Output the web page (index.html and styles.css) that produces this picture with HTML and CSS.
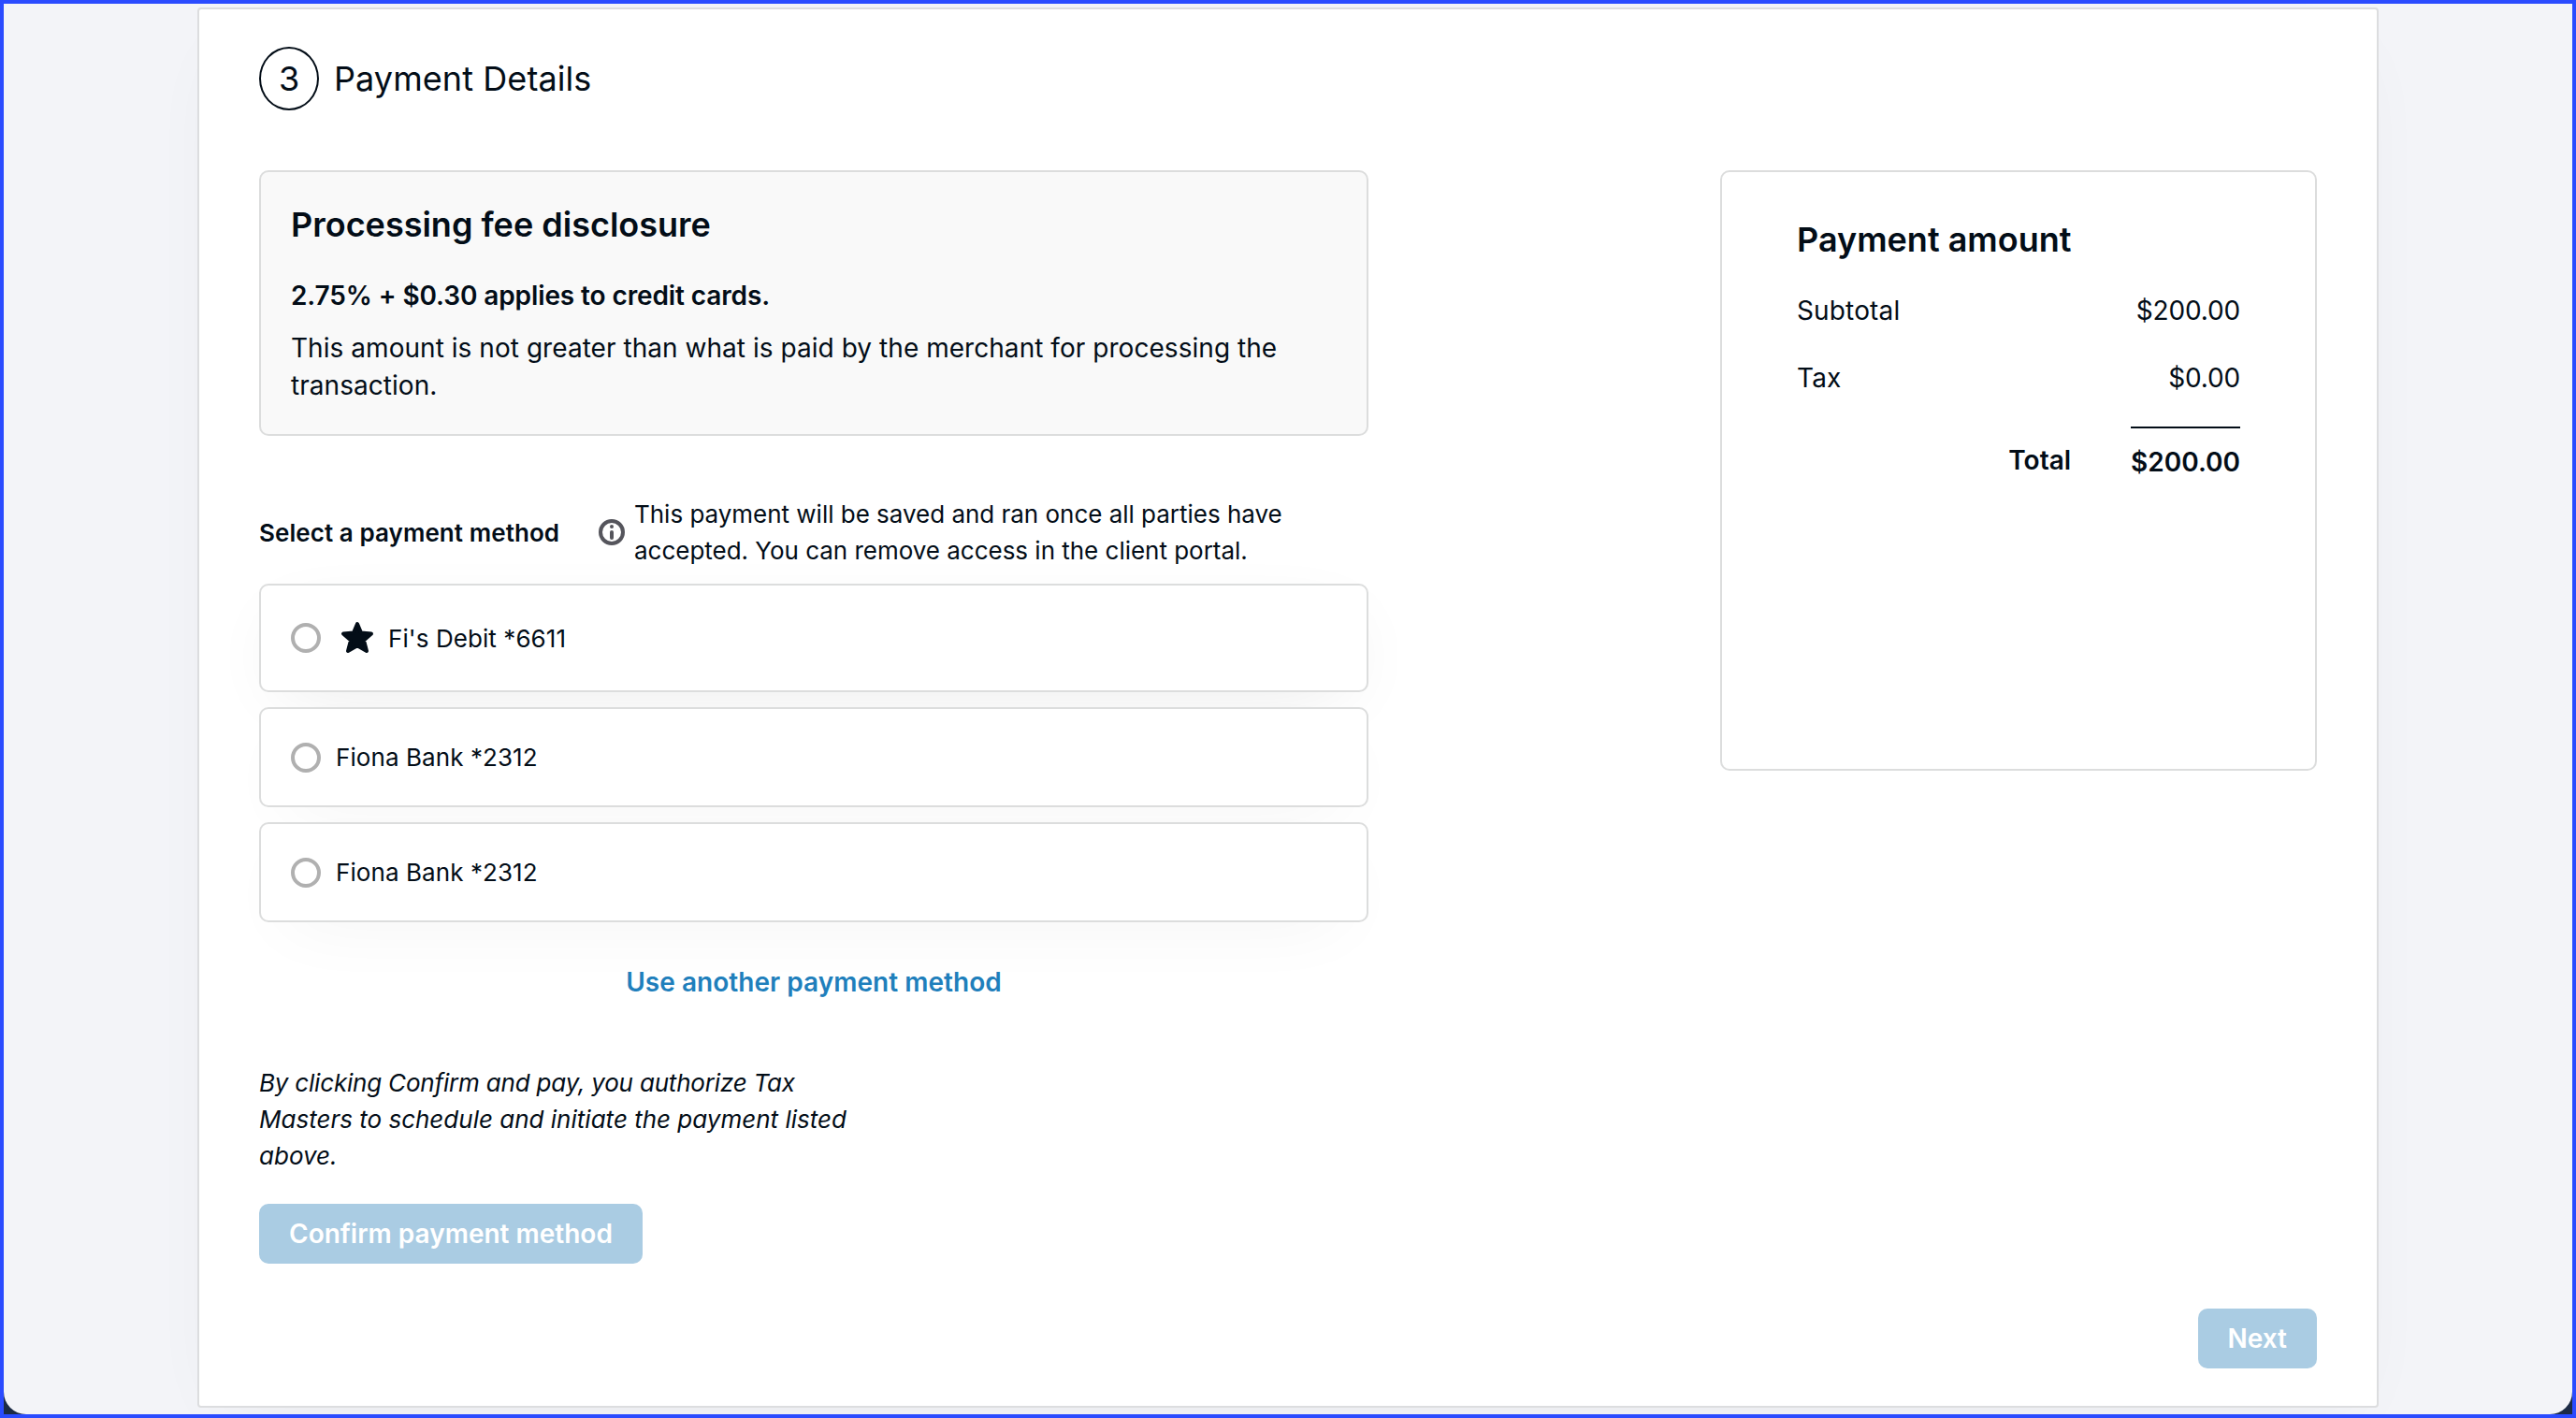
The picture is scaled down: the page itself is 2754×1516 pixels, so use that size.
FILE: index.html
```html
<!DOCTYPE html>
<html lang="en">
<head>
    <meta charset="UTF-8">
    <meta name="viewport" content="width=device-width, initial-scale=1.0">
    <title>Payment Details</title>
    <link rel="stylesheet" href="styles.css">
</head>
<body>

<div class="window">
    <div class="page">
        <main class="card">
            <header class="step">
                <span class="step-number">3</span>
                <h1 class="step-title">Payment Details</h1>
            </header>

            <div class="columns">
                <div class="payment">
                    <section class="disclosure">
                        <h2 class="section-title">Processing fee disclosure</h2>
                        <p class="disclosure-rate">2.75% + $0.30 applies to credit cards.</p>
                        <p class="disclosure-text">This amount is not greater than what is paid by the merchant for processing the transaction.</p>
                    </section>

                    <div class="method-header">
                        <h3 class="method-label" id="methodLabel">Select a payment method</h3>
                        <svg class="info-icon" viewBox="0 0 28 28" aria-hidden="true">
                            <circle cx="14" cy="14" r="12" fill="none" stroke="#55555c" stroke-width="4"/>
                            <circle cx="14" cy="8" r="2" fill="#55555c"/>
                            <rect x="12" y="12" width="4" height="10" rx="2" fill="#55555c"/>
                        </svg>
                        <p class="method-note">This payment will be saved and ran once all parties have accepted. You can remove access in the client portal.</p>
                    </div>

                    <div class="methods" role="radiogroup" aria-labelledby="methodLabel">
                        <label class="method method-default">
                            <input class="method-radio" type="radio" name="method">
                            <svg class="star-icon" viewBox="0 0 36 35" aria-hidden="true">
                                <path d="M18 3 L22 12.6 L33 13.6 L25 20.6 L28 32 L18 26.2 L8 32 L11 20.6 L3 13.6 L14 12.6 Z" fill="#030d17" stroke="#030d17" stroke-width="4" stroke-linejoin="round"/>
                            </svg>
                            <span class="method-name">Fi's Debit *6611</span>
                        </label>
                        <label class="method">
                            <input class="method-radio" type="radio" name="method">
                            <span class="method-name">Fiona Bank *2312</span>
                        </label>
                        <label class="method">
                            <input class="method-radio" type="radio" name="method">
                            <span class="method-name">Fiona Bank *2312</span>
                        </label>
                    </div>

                    <a class="another-method" href="#">Use another payment method</a>

                    <p class="authorize"><span class="authorize-action">By clicking Confirm and pay, you authorize Tax</span> Masters to schedule and initiate the payment listed above.</p>
                    <button class="button" disabled>Confirm payment method</button>
                </div>

                <aside class="summary">
                    <h2 class="section-title">Payment amount</h2>
                    <div class="summary-row">
                        <span class="summary-label">Subtotal</span>
                        <span class="summary-value">$200.00</span>
                    </div>
                    <div class="summary-row">
                        <span class="summary-label">Tax</span>
                        <span class="summary-value">$0.00</span>
                    </div>
                    <div class="summary-total">
                        <span class="total-label">Total</span>
                        <span class="total-value">$200.00</span>
                    </div>
                </aside>
            </div>

            <footer class="card-footer">
                <button class="button" disabled>Next</button>
            </footer>
        </main>
    </div>
</div>

</body>
</html>
```
FILE: styles.css
```css
* {
    box-sizing: border-box;
}

body {
    margin: 0;
    font-family: Inter, "Liberation Sans", sans-serif;
    font-size: 28px;
    line-height: 40px;
    color: #030d17;
}

h1, h2, h3, p {
    margin: 0;
}

.window {
    height: 1516px;
    border: 4px solid #2a4bff;
    background-color: #1c2b45;
    overflow: hidden;
}

.page {
    height: 100%;
    padding: 4px 207px 7px;
    background-color: #f3f4f8;
    border-radius: 0 0 24px 24px;
    overflow: hidden;
}

.card {
    display: flex;
    flex-direction: column;
    height: 1497px;
    padding: 40px 64px;
    background-color: #fff;
    border: 2px solid #dcdddf;
    border-radius: 4px;
    box-shadow: 0 24px 80px -32px rgba(0, 0, 0, 0.06);
}

.step {
    display: flex;
    align-items: center;
    gap: 16px;
    margin-bottom: 64px;
}

.step-number {
    display: flex;
    align-items: center;
    justify-content: center;
    width: 64px;
    height: 68px;
    border: 2px solid #030d17;
    border-radius: 50%;
    font-size: 36px;
}

.step-title {
    font-size: 36px;
    font-weight: 400;
    letter-spacing: 0.08px;
}

.columns {
    display: flex;
    justify-content: space-between;
    align-items: flex-start;
}

.payment {
    width: 1186px;
}

.section-title {
    font-size: 36px;
    font-weight: 600;
}

.disclosure {
    height: 284px;
    padding: 36px 32px;
    background-color: #f9f9f9;
    border: 2px solid #dcdddd;
    border-radius: 10px;
}

.disclosure-rate {
    margin-top: 36px;
    font-weight: 600;
    letter-spacing: -0.11px;
}

.disclosure-text {
    margin-top: 16px;
    letter-spacing: 0.045px;
}

.method-header {
    display: flex;
    align-items: center;
    margin-top: 64px;
    font-size: 26px;
    line-height: 39px;
}

.method-label {
    font-size: 26px;
    font-weight: 600;
    letter-spacing: 0.07px;
    width: 363px;
}

.info-icon {
    flex: none;
    width: 28px;
    height: 28px;
    margin-right: 10px;
}

.method-note {
    width: 740px;
    letter-spacing: -0.02px;
}

.methods {
    display: flex;
    flex-direction: column;
    gap: 16px;
    margin-top: 16px;
}

.method {
    display: flex;
    align-items: center;
    height: 107px;
    padding: 0 32px;
    background-color: #fff;
    border: 2px solid #dcdddd;
    border-radius: 10px;
    box-shadow: 0 24px 80px -32px rgba(0, 0, 0, 0.07);
    font-size: 26px;
    letter-spacing: 0.08px;
}

.method-default {
    height: 116px;
    box-shadow: 0 20px 80px -28px rgba(0, 0, 0, 0.11);
}

.method-radio {
    appearance: none;
    width: 32px;
    height: 32px;
    margin: 0;
    border: 4px solid #b0b0b0;
    border-radius: 50%;
    background-color: #fff;
}

.star-icon {
    width: 36px;
    height: 35px;
    margin: 0 -1px 2px 21px;
}

.method-name {
    margin-left: 16px;
}

.method-default .method-name {
    padding-top: 1px;
}

.another-method {
    display: block;
    margin-top: 44px;
    color: #1f7fbc;
    font-weight: 600;
    letter-spacing: 0.04px;
    text-align: center;
    text-decoration: none;
}

.authorize {
    width: 640px;
    margin-top: 68px;
    font-size: 26px;
    font-style: italic;
    line-height: 39px;
}

.authorize-action {
    letter-spacing: -0.2px;
}

.button {
    height: 64px;
    padding: 0 32px;
    background-color: #aacce3;
    border: none;
    border-radius: 10px;
    color: #fff;
    font-family: inherit;
    font-size: 28px;
    font-weight: 600;
}

.authorize + .button {
    margin-top: 32px;
}

.summary {
    width: 638px;
    height: 642px;
    padding: 52px 80px;
    border: 2px solid #dcdddd;
    border-radius: 10px;
}

.summary-row {
    display: flex;
    justify-content: space-between;
    margin-top: 32px;
}

.summary .section-title + .summary-row {
    margin-top: 36px;
}

.summary-label {
    letter-spacing: 0.15px;
}

.summary-value {
    letter-spacing: -0.15px;
}

.summary-total {
    display: flex;
    justify-content: flex-end;
    gap: 64px;
    margin-top: 32px;
    font-weight: 600;
}

.total-label {
    padding-top: 16px;
}

.total-value {
    padding-top: 16px;
    border-top: 2px solid #030d17;
}

.card-footer {
    display: flex;
    justify-content: flex-end;
    margin-top: auto;
}
```
